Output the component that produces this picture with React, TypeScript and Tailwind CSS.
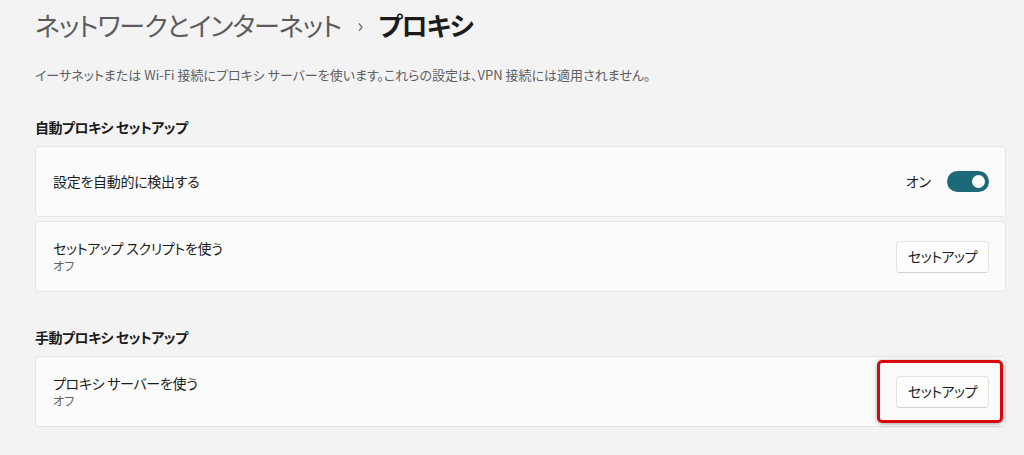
import React from "react";

const font = "font-['Noto_Sans_CJK_JP','Noto_Sans',sans-serif] [font-feature-settings:'palt']";

function Toggle() {
  return (
    <div className="flex items-center gap-[16px]">
      <span className="text-[14px] text-[#1b1b1b]">オン</span>
      <div className="flex h-[21px] w-[42px] items-center justify-end rounded-full bg-[#1c6a77] pr-[4px]">
        <div className="h-[13px] w-[13px] rounded-full bg-white" />
      </div>
    </div>
  );
}

function SetupButton({ highlight }: { highlight?: boolean }) {
  return (
    <div className="relative">
      {highlight && (
        <div className="absolute -top-[16px] -bottom-[15px] -left-[19px] -right-[14px] rounded-[5px] border-[3px] border-[#d9080c] shadow-[0_1px_4px_rgba(0,0,0,0.35)]" />
      )}
      <button className="relative h-[32px] w-[93px] rounded-[4px] border border-[#e3e3e3] border-b-[#d2d2d2] bg-[#fdfdfd] text-[14px] tracking-[-0.5px] text-[#1b1b1b]">
        セットアップ
      </button>
    </div>
  );
}

function Card({
  title,
  sub,
  children,
}: {
  title: string;
  sub?: string;
  children: React.ReactNode;
}) {
  return (
    <div className="flex h-[71px] items-center justify-between rounded-[4px] border border-[#e5e5e5] bg-[#fbfbfb] pl-[17px] pr-[16px]">
      <div className="flex flex-col">
        <span className="text-[14px] leading-[19px] tracking-[-0.3px] text-[#1b1b1b]">{title}</span>
        {sub && <span className="text-[12px] leading-[16px] text-[#606060]">{sub}</span>}
      </div>
      {children}
    </div>
  );
}

export default function App() {
  return (
    <div className={`${font} h-[455px] w-full overflow-hidden bg-[#f3f3f3] pl-[35px] pr-[18px]`}>
      <h1 className="mt-[6px] flex h-[38px] items-center text-[26px] leading-[38px] tracking-[-1px]">
        <span className="text-[#5c5c5c]">ネットワークとインターネット</span>
        <span className="mx-[16px] text-[20px] text-[#6b6b6b]">›</span>
        <span className="font-semibold text-[#1b1b1b]">プロキシ</span>
      </h1>
      <p className="mt-[21px] text-[13px] leading-[20px] text-[#5f5f5f]">
        イーサネットまたは Wi-Fi 接続にプロキシ サーバーを使います。これらの設定は、VPN 接続には適用されません。
      </p>

      <h2 className="mt-[32px] text-[14px] font-semibold leading-[20px] tracking-[-0.5px] text-[#1b1b1b]">
        自動プロキシ セットアップ
      </h2>
      <div className="mt-[9px] flex flex-col gap-[4px]">
        <Card title="設定を自動的に検出する">
          <Toggle />
        </Card>
        <Card title="セットアップ スクリプトを使う" sub="オフ">
          <SetupButton />
        </Card>
      </div>

      <h2 className="mt-[35px] text-[14px] font-semibold leading-[20px] tracking-[-0.5px] text-[#1b1b1b]">
        手動プロキシ セットアップ
      </h2>
      <div className="mt-[9px]">
        <Card title="プロキシ サーバーを使う" sub="オフ">
          <SetupButton highlight />
        </Card>
      </div>
    </div>
  );
}
